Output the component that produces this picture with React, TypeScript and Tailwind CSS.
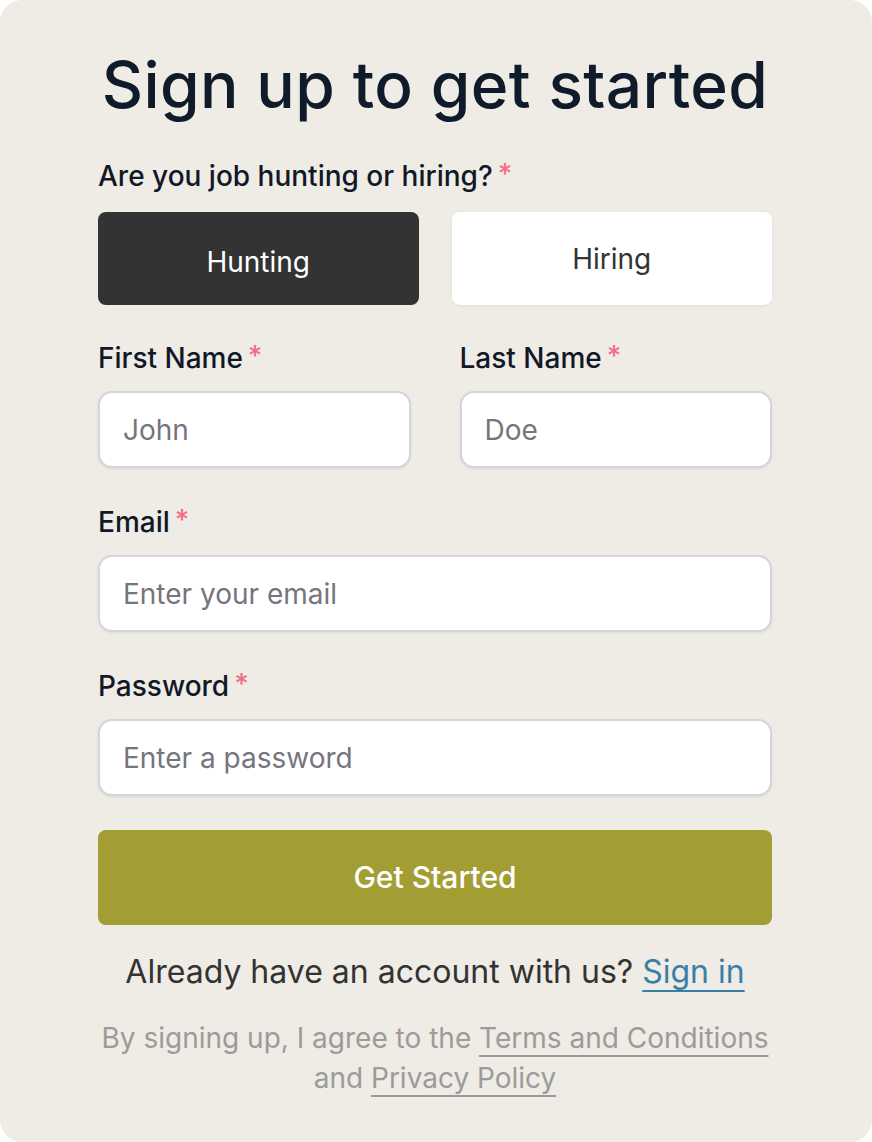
import React from "react";

function Label({ children }: { children: React.ReactNode }) {
  return (
    <div className="flex items-center gap-[5px] text-[28px] leading-[40px] font-medium text-[#111827]">
      <span>{children}</span>
      <span className="text-[#f36d86] -translate-y-[2px]">*</span>
    </div>
  );
}

function Input({ placeholder }: { placeholder: string }) {
  return (
    <input
      placeholder={placeholder}
      className="w-full h-[77px] rounded-[14px] border-2 border-[#d5d6dc] bg-white px-[23px] text-[28px] text-[#111827] placeholder:text-[#75757d] shadow-[0_1px_3px_rgba(0,0,0,0.08)] outline-none"
      style={{ fontFamily: "Inter, sans-serif" }}
    />
  );
}

export default function App() {
  return (
    <div className="bg-white min-h-screen" style={{ fontFamily: "Inter, 'Noto Sans', sans-serif" }}>
      <div className="h-[1142px] rounded-[22px] bg-[#efebe5] pl-[98px] pr-[100px] pt-[53px]">
        <h1 className="text-center text-[64px] leading-[64px] font-medium text-[#0f1b2b] tracking-[0.4px]">
          Sign up to get started
        </h1>
        <div className="mt-[39px]">
          <Label>Are you job hunting or hiring?</Label>
          <div className="mt-[16px] grid grid-cols-2 gap-[33px]">
            <button className="h-[93px] rounded-[8px] bg-[#333333] text-white text-[28px] pt-[6px]">Hunting</button>
            <button className="h-[93px] rounded-[8px] bg-white text-[#333333] text-[28px] shadow-[0_1px_3px_rgba(0,0,0,0.06)]">Hiring</button>
          </div>
        </div>
        <div className="mt-[33px] grid grid-cols-2 gap-[49px]">
          <div>
            <Label>First Name</Label>
            <div className="mt-[13px]"><Input placeholder="John" /></div>
          </div>
          <div>
            <Label>Last Name</Label>
            <div className="mt-[13px]"><Input placeholder="Doe" /></div>
          </div>
        </div>
        <div className="mt-[34px]">
          <Label>Email</Label>
          <div className="mt-[13px]"><Input placeholder="Enter your email" /></div>
        </div>
        <div className="mt-[34px]">
          <Label>Password</Label>
          <div className="mt-[13px]"><Input placeholder="Enter a password" /></div>
        </div>
        <button className="mt-[34px] w-full h-[95px] rounded-[8px] bg-[#a39e33] text-white text-[30px] font-medium">
          Get Started
        </button>
        <p className="mt-[27px] text-center text-[32px] leading-[40px] text-[#333333]">
          Already have an account with us?{" "}
          <a className="text-[#3a7fa8] underline underline-offset-[7px] decoration-2" href="#">Sign in</a>
        </p>
        <p className="mt-[26px] text-center text-[28px] leading-[40px] text-[#9b9b9b]">
          By signing up, I agree to the{" "}
          <a className="underline underline-offset-[7px] decoration-2" href="#">Terms and Conditions</a>
          <br />
          and <a className="underline underline-offset-[7px] decoration-2" href="#">Privacy Policy</a>
        </p>
      </div>
    </div>
  );
}
